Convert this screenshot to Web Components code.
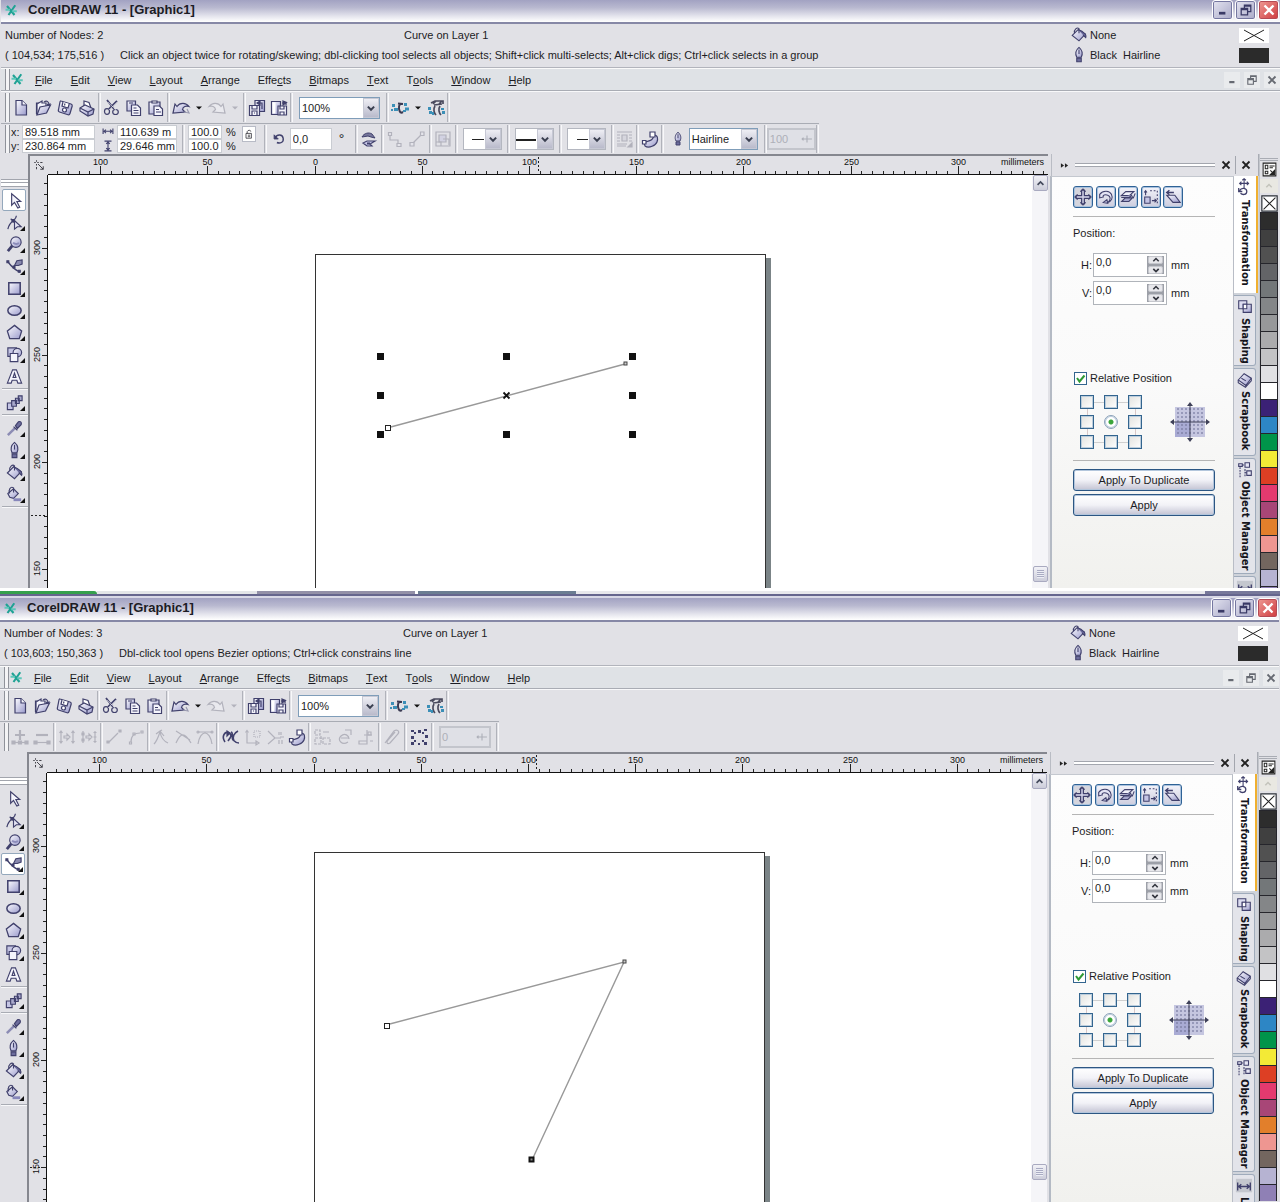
<!DOCTYPE html>
<html lang="en">
<head>
<meta charset="utf-8">
<title>CorelDRAW 11</title>
<style>
html,body{margin:0;height:100%}
body{display:flex;flex-direction:column;height:100vh;overflow:hidden;background:#fff;font:11px/14px "Liberation Sans",Arial,sans-serif;color:#1c1c24}
#first{flex:none}
#second{flex:1;min-height:0}
</style>
</head>
<body>
<corel-window id="first" mode="pick"></corel-window>
<task-strip></task-strip>
<corel-window id="second" mode="bezier"></corel-window>
<script>
const D='#40406c', L='#c4c4e4', W='#f4f4fc';
const ICON={
logo:`<g stroke="#1fa294" stroke-width="2.800"><path d="M4 4l10 12M15 3L6 16"/></g><path d="M2 9h6M11 11h6" stroke="#5cc7ba" stroke-width="2.400"/>`,
newdoc:`<path d="M5 2.500h6l4.500 4.500V17H5z" fill="url(#g)"/><path d="M11 2.500V7h4.500" fill="${W}"/>`,
open:`<path d="M3.500 16V5h3l1.500 2h3" /><path d="M4 17V6l5-3v2l4 0v3" fill="${W}"/><path d="M4 17l3-8 10.500-2-4 8z" fill="url(#g)"/><path d="M11 4c3-2 5 0 5 3M14 6l2 1.500 1.500-2"/>`,
save:`<path d="M6 3l10 3c1 .4 1.400 1 1.200 2L15 15.500c-.3 1-1 1.500-2 1.200L4.500 14c-1-.3-1.400-1-1.100-2L5 4c.2-.8.500-1.200 1-1z" fill="url(#g)"/><path d="M8 4l-1 4 6 2 1.200-4" fill="#fff"/><circle cx="9.500" cy="12" r="2" fill="#fff"/><path d="M10 5.500l-.5 2"/>`,
print:`<path d="M7 8V3l5 1.500L14 10" fill="#fff"/><path d="M3 10l5-3 9 4-1 5-5 2-8-5z" fill="url(#g)"/><path d="M3 10l8 4 6-3M11 14v4"/>`,
cut:`<path d="M5 2l7 9M15 3l-8 8" stroke-width="1.800"/><ellipse cx="5" cy="13.500" rx="2.500" ry="2.800"/><ellipse cx="13.500" cy="14" rx="2.800" ry="2.500"/><path d="M6 4l8 8M15 4L7 12" stroke="#fff" stroke-width=".5"/>`,
copy:`<path d="M3 3h8.500v10H3z" fill="url(#g)"/><path d="M7.500 7h6l3 3v7.500h-9z" fill="${W}"/><path d="M9.500 10h3M9.500 12.500h5M9.500 15h5M5 5h4"/>`,
paste:`<path d="M3 4h11v12H3z" fill="url(#g)"/><path d="M6 5V3h5v2z" fill="#fff"/><path d="M8 8h5.500l3 3v6.500H8z" fill="${W}"/><path d="M10 11.500h3M10 14h5"/>`,
undo:`<path d="M2 15L4 6l2 2.500c3-4.500 9-4 12 0-3-1-6 0-6.500 3l2.500 2.500z" fill="url(#g)"/><path d="M16 11l2 4-5-1" stroke="#9a9ab0"/>`,
redo:`<path d="M18 15L16 6l-2 2.500C11 4 5 4.500 2 8.500c3-1 6 0 6.500 3L6 14z" fill="#e9e9ee"/>`,
imp:`<path d="M8 2.500h9.500v11H8z" fill="url(#g)"/><path d="M2.500 7.500h10v10h-10z" fill="${W}"/><path d="M5 7.500v3.500h5V7.500M5 17v-4h5v4M12 5h3v6M7 15h1"/><path d="M10 5l3-2v4z" fill="currentColor"/>`,
exp:`<path d="M2.500 3.500h9v13h-9z" fill="url(#g)"/><path d="M9 8h8.500v9H9z" fill="${W}"/><path d="M11 8v3h4V8M11 17v-3h4v3M13 5h4v2"/><path d="M14 3l3.500 1.500L14 7z" fill="currentColor"/><path d="M3.500 4.500h3v11h-3z" fill="#fff" stroke="none"/>`,
launch:`<g stroke="#3a3a52" stroke-width="2"><path d="M8 5.500l5 .5M10 6c-2 3-1 7 1 9M13 14l-2 1"/></g><g fill="#3b8fb7" stroke="none"><path d="M2 6h3v3H2zM4 10h4v3H4zM1 11h2v2H1zM14 5h3v3h-3zM15 9.500h4v3h-4zM13 12h3v2h-3z"/></g>`,
online:`<g stroke="#4a4a5e" stroke-width="1.700"><path d="M5 5l4-2h8v3M8 7l8-1M9 8c-2 3-1 7 1 9M14 8c-2 3-1 7 1 9M16 3l-3 3M10 3L7 6"/></g><g fill="#3b8fb7" stroke="none"><path d="M2 9h3v3H2zM3 13h3v3H3zM15 10h3v2h-3zM16 13h3v3h-3zM6 14h2v3H6z"/></g>`,
bucket:`<path d="M2.500 10.500L9 4l8 5-7 7.500z" fill="url(#g)"/><path d="M5 8c-1-4 3-7 5-5v5"/><path d="M9 4c3 1 6 3 8 5 1 2 1 3 .500 4l-3-3" fill="#6a6a9c"/>`,
nib:`<path d="M10 1.500c-3.500 3-4.500 7-2.500 11h5c2-4 1-8-2.500-11z" fill="url(#g)"/><path d="M10 4v5" /><path d="M7.500 13.500h5v4h-5z" fill="#6c6c9c"/>`,
w:`<path d="M3 5v8M17 5v8M4 9h12M7 6.500L4.500 9 7 11.500M13 6.500L15.500 9 13 11.500" stroke-width="1.600"/>`,
h:`<path d="M5 3h10M5 17h10M10 4v12M7.500 7L10 4.500 12.500 7M7.500 13l2.500 2.500 2.500-2.500" stroke-width="1.600"/>`,
lock:`<path d="M5 9h9v8H5z" fill="#fff"/><path d="M7 9V6c1-3 6-3 6 0M8 12h4M8 14.500h4"/>`,
rotate:`<path d="M5 8c2-5 10-5 11 1s-5 8-9 6" stroke-width="2"/><path d="M3 4v6h6z" fill="currentColor"/>`,
flip:`<path d="M3 8c2-4 7-5 10-3l3 4-4-1-3-1z" fill="#77779c" stroke-width="1"/><path d="M16 12H8l-4 2 4 3h5l-2-2z" fill="${L}"/><path d="M8 14.500h3" stroke-width="2"/>`,
conn1:`<path d="M5 5v6h8v5"/><path d="M3.500 3.500h3v3h-3zM12 14.500h4v3h-4z" fill="#e4e4ea"/>`,
conn2:`<path d="M5 15L15 5"/><path d="M3 13.500h4v3.500H3zM13.500 3h3.500v3.500h-3.500z" fill="#e4e4ea"/>`,
break:`<path d="M3 3h14v14H3z"/><path d="M6 6h7v7H6z" fill="#d2d2e2"/><path d="M10 10h6v6M3 13h5v4"/>`,
wrap:`<path d="M2 3h15M2 6h3M14 6h3M2 9h3M14 9h3M2 12h3M14 12h3M2 15h10M2 17h9"/><path d="M7 6h5v6H7z" fill="#d6d6de"/><path d="M17 14v4h-4z" fill="currentColor"/>`,
curve:`<path d="M4 14c4-3 9-1 10-8 4 0 4 4 3 7s-8 7-12 4z" fill="url(#g)"/><path d="M10 3h5v5h-5zM2.500 11.500H6V15H2.500z" fill="#fff"/>`,
add:`<path d="M10 3v10M5 8h10" stroke-width="2.200"/><path d="M3 15.500h14" /><path d="M2 14h3v3H2zM8.500 14h3v3h-3zM15 14h3v3h-3z" fill="currentColor"/>`,
sub:`<path d="M4 8h12" stroke-width="2.200"/><path d="M3 15.500h14"/><path d="M2 14h3v3H2zM15 14h3v3h-3z" fill="currentColor"/>`,
join:`<path d="M4 4v12M16 4v12M2.500 6L4 4l1.500 2M14.500 6L16 4l1.500 2M2.500 14L4 16l1.500-2M14.500 14l1.500 2 1.500-2M7 9h3V7l3 3-3 3v-2H7z"/>`,
split:`<path d="M4 4v12M16 4v12M14.500 5.500h3M14.500 10h3M14.500 14.500h3M7 9h3V7l3 3-3 3v-2H7z"/><path d="M3 6h2v2H3zM3 12h2v2H3z" fill="currentColor"/>`,
toline:`<path d="M5 15L14 6"/><path d="M3 14h2v2H3zM15 3h2v2h-2z" fill="currentColor"/>`,
tocurve:`<path d="M5 15c0-7 4-9 9-9"/><path d="M3.500 15h2v2h-2zM15 4h2v2h-2zM7 6h2v2H7z"/>`,
cusp:`<path d="M3 17c2-2 4-6 6-12M9 5c1 5 3 9 8 11M5 7l4-3 2-1M9 4l4 5"/>`,
smooth:`<path d="M3 16c2-4 3-7 6-8s6 3 9 8M3 4l14 9"/>`,
sym:`<path d="M3 17c1-7 4-11 7-11s6 4 7 11M3 5h14"/><circle cx="3" cy="5" r="1"/><circle cx="17" cy="5" r="1"/>`,
reverse:`<path d="M4 15C0 9 4 4 8 6s1 5-1 8M10 5c3 1 0 6 2 8s4 3 6 3M17 4c-4 2-6 6-4 10" stroke-width="1.600"/><path d="M6 4l3 2-3 3z" fill="currentColor"/>`,
extend:`<path d="M4 4v12h10"/><path d="M2.500 5.500L4 3.500l1.500 2M13 14l3 2-3 2z"/><path d="M11 4h6v6h-6z" stroke-dasharray="1 1"/>`,
extract:`<path d="M3 4l7 7-7 6M14 5v3M16 5v3M10 11h6"/><path d="M14 13v4M17 13v4M15 10h4"/>`,
stretch:`<path d="M3 3h5v5H3zM3 11h6v6H3zM11 11h7v6h-7z" stroke-dasharray="3 1"/><path d="M11 5h6M9 9v3"/>`,
rotn:`<path d="M14 15c-6 4-11-2-7-6s8 0 8 3M7 11h8M11 3h6v5"/>`,
align:`<path d="M3 14h8v3H3zM11 3v11M8 8h8M14 14h3"/><path d="M12 5h3v3h-3z"/>`,
elastic:`<path d="M3 16l9-12c3-2 6 0 4 3l-8 9c-3 2-4-1-2-3l7-8"/>`,
selnodes:`<g fill="currentColor" stroke="none"><path d="M2 3h3v2H2zM9 3h3v3H9zM15 2h3v2h-3zM2 9h3v3H2zM16 8h3v3h-3zM2 15h3v3H2zM9 16h2v2H9zM15 15h3v3h-3zM5 5h2v2H5zM13 13h2v2h-2zM13 5h2v2h-2zM5 13h2v2H5z"/></g>`,
plusbtn:`<path d="M10 5v10M3 10h14M5 8L3 10l2 2" stroke-width="1.600"/>`,
pick:`<path d="M7 3v12l3-3 3.500 6 2-1-3-6h4z" fill="${W}"/>`,
shape:`<path d="M3 17c1-4 3-7 6-9 2-2 3-3 3-5M6 6l6 6" stroke-width="1.300"/><path d="M10 8v9l3-2.500h4z" fill="#e4e4f4"/><path d="M7.500 7h2.500v2.500H7.500z" fill="currentColor"/>`,
zoom:`<path d="M8 11l-5 6" stroke-width="3"/><circle cx="11.500" cy="7.500" r="5.500" fill="url(#g)"/><path d="M8.500 8c2 2 5 2 6 0" stroke="#8c8cba" stroke-width="2"/>`,
bezier:`<path d="M3 5c3 4 8 9 13 11" stroke-width="1.400"/><path d="M2 4h2v2H2zM8.500 9.500h2v2h-2zM14 14h2v2h-2z" fill="currentColor"/><path d="M10 9l2.500-5L18 3v4.500L14 9z" fill="#8888ae"/>`,
rect:`<path d="M4 4h12v12H4z" fill="url(#g)" stroke-width="1.600"/>`,
ellipse:`<ellipse cx="10" cy="10" rx="7" ry="5" fill="url(#g)" stroke-width="1.600"/>`,
poly:`<path d="M10 2.500l7.500 6L15 16.500H5L2.500 8.500z" fill="url(#g)" stroke-width="1.400"/>`,
shapes:`<path d="M3 3h9v9H3z" fill="${L}"/><circle cx="13" cy="8" r="4.500" fill="url(#g)"/><path d="M5.500 9h8v8.500h-8z" fill="${W}"/>`,
text:`<path d="M2.500 17L8 3h4l5.500 14h-4l-1-3h-5l-1 3zM8.500 11h3L10 6.500z" fill="${W}"/>`,
blend:`<path d="M2.500 10.500h6v7h-6z" fill="${L}"/><path d="M7 8h5v6H7zM11 5.500h4V11h-4zM14 3h4v5h-4z" fill="#a9a9cc"/>`,
dropper:`<path d="M3 17l8-8" stroke-width="2.600" stroke="#8c8cb4"/><path d="M9 8l4 4M11 7l3-4c2-1 4 0 3 3l-4 4z" fill="#6e6e9c"/>`,
ifill:`<path d="M3 9l6-5 5 5-5 5-4-1z" fill="url(#g)"/><path d="M5 9c-2-4 1-8 4-6v5"/><path d="M9 15.500h8" stroke="#8787bb" stroke-width="3"/>`,
origin:`<path d="M3 6h2M7 6h2M11 6h3M6 3v2M6 8v2M6 12v3" stroke="#33333b"/><path d="M8 8l7 7M15 11v4h-4" stroke="#33333b"/>`,
t1:`<path d="M10 2v16M2 10h16" stroke-width="4.400"/><path d="M10 3v14M3 10h14" stroke="#d8d8ec" stroke-width="1.600"/><path d="M7 4l3-3 3 3M7 16l3 3 3-3M4 7l-3 3 3 3M16 7l3 3-3 3"/>`,
t2:`<path d="M3 7c4-5 11-4 13 0s0 8-4 9c4-3 3-7 0-8S6 8 7 10l-4 1z" fill="#e4e4f4"/><path d="M7 16l5 1-1-4z" fill="${L}"/>`,
t3:`<path d="M2.500 8.500l5-4.500h9l-5 4.500z" fill="#f0f0fa"/><path d="M2.500 10.500h9l3-3M3 15l4-4h8l-4 4z" fill="#a6a6cc"/><path d="M14 9l2 2 2-5"/>`,
t4:`<path d="M3 10h6v7H3z" fill="${L}"/><path d="M9 3h8v14" stroke-dasharray="2 2"/><path d="M4 8V3M2.500 5L4 3l1.500 2M11 14h5M14 12l2 2-2 2"/>`,
t5:`<path d="M3 8h9l6 8H10z" fill="url(#g)"/><path d="M11 5H3M6 2.500L3 5l3 2.500" stroke-width="1.500"/>`,
tt:`<path d="M9 1v10M4 6h10M7 2.500L9 .800 11 2.500M12 4l2 2-2 2M6 4L4 6l2 2"/><path d="M4 14c2-4 8-3 8 1s-5 4-7 2M3 11v4h4" stroke-width="1.400"/>`,
ts:`<path d="M3 3h9v9H3z" fill="#dcdcf0"/><path d="M8 7h9v9H8z"  fill="url(#g)"/><path d="M8 7h4v5H8z" fill="#fff"/>`,
tb:`<path d="M2.500 10L9 3l8 5-6 8z" fill="url(#g)"/><path d="M2.500 10v3l8 5 6.500-7V8M11 15v3M6 8l5 3"/>`,
to:`<path d="M3 3h4v3H3zM10 2h5v5h-5zM12 11h5v5h-5z" fill="#e6e6f4"/><path d="M4.500 7v11M7 4.500h3M10 9v8M10 13h2" stroke-dasharray="2 1"/>`,
tl:`<path d="M1 2h18v15H1z" fill="#c4c7ce" stroke="none"/><path d="M3 6v9M17 6v9M4 10.500h12M7 8l-3 2.500L7 13M13 8l3 2.500-3 2.500" stroke-width="1.500"/>`,
palmenu:`<path d="M2.500 2.500h15v15h-15z" fill="#fff" stroke="#222"/><path d="M5 5h3v4H5zM5 12h3v3H5zM10 6h6M10 8h4" stroke="#222"/><path d="M16 11v5h-5z" fill="#222" stroke="#222"/><path d="M11 11l4 4" stroke="#222"/>`,
nofill:`<path d="M1 1h18v18H1z" fill="#fff" stroke="#2b3038" stroke-width="1.400"/><path d="M3 3l14 14M17 3L3 17" stroke="#222"/>`,
up:`<path d="M5.500 12l4.500-4.500 4.500 4.500" stroke-width="2.600"/>`,
down:`<path d="M5.500 8l4.500 4.500L14.500 8" stroke-width="2.800"/>`,
tri:`<path d="M4 7h12l-6 6z" fill="currentColor" stroke="none"/>`,
x:`<path d="M5 5l10 10M15 5L5 15" stroke-width="2.600"/>`,
min:`<path d="M5 14h8" stroke-width="3.400"/>`,
max:`<path d="M4 8h8v8H4zM8 8V4h8v8h-4M4 9.500h8M8 5h8" stroke-width="1.600"/>`,
ff:`<path d="M2 5l7 5-7 5zM11 5l7 5-7 5z" fill="currentColor" stroke="none"/>`
};
function svg(n,s=20){return `<svg width="${s}" height="${s}" viewBox="0 0 20 20" fill="none" stroke="currentColor" stroke-width="1.200" aria-hidden="true"><defs><linearGradient id="g" x1="0" y1="0" x2="1" y2="1"><stop offset="0" stop-color="#fcfcff"/><stop offset="1" stop-color="#9a9acc"/></linearGradient></defs>${ICON[n]}</svg>`}
const BASE=`:host,*{box-sizing:border-box}svg{display:block;flex:none}button,input,select{font:inherit;color:inherit;margin:0;padding:0;border:0;background:none;border-radius:0;outline:0}button{display:flex;align-items:center;justify-content:center}`;
function define(name,css,html){
  customElements.define(name,class extends HTMLElement{
    connectedCallback(){
      if(this.shadowRoot)return;
      this.attachShadow({mode:'open'}).innerHTML=`<style>${BASE}${css}</style>${html(this)}`;
    }
  });
}

define('task-strip',`:host{display:flex;flex:none;height:6px;padding-top:3px;background:#fff}
i{display:block;height:3px}.a{width:97px;background:#35a04d;border-radius:0 3px 0 0}.b{width:160px;background:#e3e5e8}.c{width:158px;background:#9390a8}.d{width:158px;margin-left:3px;background:#6b7d92}.e{flex:1;background:#e8e8ec}.f{width:75px;background:#77789a}`,
()=>`<i class="a"></i><i class="b"></i><i class="c"></i><i class="d"></i><i class="e"></i><i class="f"></i>`);

define('tool-button',`:host{display:block;width:22px;height:22px;flex:none;color:${D}}:host([disabled]){color:#b2b2bc}:host([small]){width:14px;color:#111}:host([small][disabled]){color:#b2b2bc}
button{width:100%;height:100%}button:disabled{color:inherit}`,
e=>`<button type="button" aria-label="${e.getAttribute('icon')}" ${e.hasAttribute('disabled')?'disabled':''}>${svg(e.getAttribute('icon'),+(e.getAttribute('size')||20))}</button>`);

define('bar-sep',`:host{display:block;flex:none;width:3px;align-self:stretch;border-left:1px solid #b0b2ba;border-right:1px solid #f8f8fa}`,()=>'');
define('bar-grip',`:host{display:block;flex:none;width:5px;align-self:stretch;margin-left:4px;border-left:1px solid #8f929a;border-right:1px solid #8f929a;background:#f4f4f6}`,()=>'');

define('xp-select',`:host{display:block;position:relative;flex:none;height:22px;background:#fff;border:1px solid #7f9db9}
:host([line]){border-color:#b4b7c0;height:22px}
select{appearance:none;width:100%;height:100%;padding:0 16px 0 2px}
.a{position:absolute;right:0;top:0;bottom:0;width:16px;display:flex;align-items:center;justify-content:center;pointer-events:none;background:linear-gradient(#eeeef4,#b9bacb);border:1px solid #c6c8d4;color:#3a3f50}
.l{position:absolute;top:50%;right:17px;background:#222}`,
e=>{const v=e.getAttribute('value')||'',l=e.getAttribute('line');
return `<select aria-label="${e.getAttribute('label')}"><option>${v}</option></select>${l?`<span class="l" style="width:${l}px;height:${l>15?2:1}px"></span>`:''}<span class="a">${svg('down',14)}</span>`});

define('title-bar',`:host{display:flex;flex:none;align-items:center;height:24px;padding:0 1px 2px 3px;border-bottom:2px solid #8688a6;background:linear-gradient(#a2a2c2,#b9b9d0 35%,#e6e6ee 75%,#fff)}
h1{flex:1;margin:0 0 0 7px;font:bold 13px/20px "Liberation Sans",Arial,sans-serif}
.b{display:flex;gap:2px}button{width:21px;height:20px;border:1px solid #fff;border-radius:3px;background:linear-gradient(135deg,#e4e4f0,#a9a9c8);box-shadow:0 0 0 1px #7577a0 inset;color:#3a3a66}
.x{color:#fff;background:linear-gradient(135deg,#ee9a94,#cf3a3e);box-shadow:0 0 0 1px #b54a55 inset}.logo{width:17px}`,
()=>`<span class="logo">${svg('logo',15)}</span><h1>CorelDRAW 11 - [Graphic1]</h1><div class="b"><button type="button" aria-label="Minimize">${svg('min',16)}</button><button type="button" aria-label="Restore">${svg('max',16)}</button><button type="button" class="x" aria-label="Close">${svg('x',18)}</button></div>`);

define('info-bar',`:host{display:flex;flex:none;height:44px;padding:1px 11px 0 4px;border-bottom:1px solid #b2b4bc}
.t{flex:1}.r,.k{display:flex;align-items:center;height:20px}.n{width:399px}.c{width:115px}.k{width:199px}.k b{flex:1;font-weight:normal;padding-left:2px;white-space:pre}
.k i{width:30px;height:15px;background:#fff;color:#222}.k i.d{background:#2b2b2b}.k span{color:${D}}`,
e=>{const p=e.getAttribute('mode')==='pick';return `<div class="t"><div class="r"><span class="n">Number of Nodes: ${p?2:3}</span><span>Curve on Layer 1</span></div><div class="r"><span class="c">${p?'( 104,534; 175,516 )':'( 103,603; 150,363 )'}</span><span>${p?'Click an object twice for rotating/skewing; dbl-clicking tool selects all objects; Shift+click multi-selects; Alt+click digs; Ctrl+click selects in a group':'Dbl-click tool opens Bezier options; Ctrl+click constrains line'}</span></div></div>
<div><div class="k"><span>${svg('bucket',18)}</span><b>None</b><i><svg width="30" height="15" stroke="#222"><path d="M5 2l20 11M25 2L5 13"/></svg></i></div><div class="k"><span>${svg('nib',18)}</span><b>Black  Hairline</b><i class="d"></i></div></div>`});

define('menu-bar',`:host{display:flex;flex:none;align-items:center;height:23px;background:#dfe2e6;border-top:1px solid #fafafa;border-bottom:1px solid #a9acb4}
nav{flex:1;display:flex;gap:18px;padding-left:10px}
.m{display:flex;gap:4px;color:#666a72}.m button{width:16px;height:16px;background:#e9ebed}`,
()=>`<bar-grip></bar-grip><span>${svg('logo',15)}</span><nav>${['_File','_Edit','_View','_Layout','_Arrange','Effe_cts','_Bitmaps','_Text','T_ools','_Window','_Help'].map(s=>`<button type="button">${s.replace(/_(.)/,'<u>$1</u>')}</button>`).join('')}</nav><div class="m"><button type="button" aria-label="Minimize document">${svg('min',13)}</button><button type="button" aria-label="Restore document">${svg('max',14)}</button><button type="button" aria-label="Close document">${svg('x',14)}</button></div>`);

const tb=(n,x='')=>`<tool-button icon="${n}" ${x}></tool-button>`, sep='<bar-sep></bar-sep>';
define('standard-bar',`:host{display:flex;flex:none;align-items:center;height:32px;padding:1px 0;border-top:1px solid #f8f8fa}
xp-select{width:81px;margin:0 6px}.w{margin-right:1px}`,
()=>`<bar-grip></bar-grip>${tb('newdoc')}${tb('open')}${tb('save')}${tb('print')}${sep}${tb('cut')}${tb('copy')}${tb('paste')}${sep}${tb('undo')}<tool-button icon="tri" size="10" small></tool-button>${tb('redo','disabled')}<tool-button class="w" icon="tri" size="10" small disabled></tool-button>${sep}${tb('imp')}${tb('exp')}${sep}<xp-select value="100%" label="Zoom level"></xp-select>${sep}${tb('launch')}<tool-button icon="tri" size="10" small></tool-button>${tb('online')}${sep}`);

define('pair-fields',`:host{display:grid;grid-template-columns:auto auto auto;column-gap:2px;align-items:center;flex:none;grid-auto-rows:14px}
label{min-width:9px;display:flex;align-items:center;color:${D}}label.t{color:#1c1c24}input{width:var(--w);height:14px;padding:0 0 0 2px;background:#fff;border:1px solid #c9ccd2}span{min-width:2px}.u{padding-left:2px}`,
e=>{const k=e.getAttribute('kind'),a=e.getAttribute('a'),b=e.getAttribute('b');
const lab={pos:['x:','y:'],size:[svg('w',14),svg('h',14)],scale:['','']}[k],c=k==='pos'?'t':'',u=k==='scale'?'%':'';
return [a,b].map((v,i)=>`<label class="${c}" for="f${i}" aria-label="${k} ${i}">${lab[i]}</label><input id="f${i}" value="${v}"><span class="${u&&'u'}">${u}</span>`).join('')});

define('nudge-box',`:host{display:flex;align-items:center;flex:none;height:22px;border:2px solid #c3c5cc;background:#dfe0e6;color:#adafb8}
input{flex:1;min-width:0;padding-left:1px}`,
e=>`<input aria-label="Smoothness" disabled value="${e.getAttribute('value')}">${svg('plusbtn',14)}`);

define('property-bar',`:host{display:flex;flex:none;height:31px}
.b{display:flex;align-items:center;border-top:1px solid #a9acb4;padding:1px 0}
.b>*{flex:none}.pos{--w:73px;margin-left:1px}.size{--w:60px;margin:0 1px 0 2px}.scale{--w:34px;margin-left:-8px}
.lk{width:14px;height:16px;background:#fff;border:1px solid #b8bbc6;margin:-10px 8px 0 6px}.rot{width:42px;height:22px;padding:0 2px;background:#fff;border:1px solid #c9ccd2}
.deg{width:23px;padding-left:7px;font-size:14px}.s{width:39px;margin:0 5px}.hl{width:69px}.g1{margin:0 3px}.g2{width:1px}.g3{width:3px}.box1{width:49px}.box2{width:52px;margin:0 5px}`,
e=>e.getAttribute('mode')==='pick'?
`<div class="b"><bar-grip></bar-grip><pair-fields class="pos" kind="pos" a="89.518 mm" b="230.864 mm"></pair-fields><pair-fields class="size" kind="size" a="110.639 m" b="29.646 mm"></pair-fields>${sep}<pair-fields class="scale" kind="scale" a="100.0" b="100.0"></pair-fields><button type="button" class="lk" aria-label="Nonproportional sizing">${svg('lock',12)}</button>${sep}<span class="g2"></span>${tb('rotate','size="14"')}<input class="rot" aria-label="Angle of rotation" value="0,0"><span class="deg">°</span>${sep}${tb('flip')}<span class="g2"></span>${sep}${tb('conn1','disabled')}${tb('conn2','disabled')}<span class="g2"></span>${sep}${tb('break','disabled')}<span class="g2"></span>${sep}<xp-select class="s" line="12" label="Start arrowhead"></xp-select>${sep}<xp-select class="s" line="20" label="Line style"></xp-select>${sep}<xp-select class="s" line="11" label="End arrowhead"></xp-select>${sep}${tb('wrap','disabled')}${sep}${tb('curve')}${sep}<span class="g3"></span>${tb('nib','size="16"')}<xp-select class="hl" value="Hairline" label="Outline width"></xp-select><span class="g1"></span>${sep}<nudge-box class="box1" value="100"></nudge-box>${sep}</div>`:
`<div class="b"><bar-grip></bar-grip>${tb('add','disabled')}${tb('sub','disabled')}${sep}${tb('join','disabled')}${tb('split','disabled')}${sep}${tb('toline','disabled')}${tb('tocurve','disabled')}${sep}${tb('cusp','disabled')}${tb('smooth','disabled')}${tb('sym','disabled')}${sep}<span class="g2"></span>${tb('reverse')}${tb('extend','disabled')}${tb('extract','disabled')}${tb('curve')}${sep}${tb('stretch','disabled')}${tb('rotn','disabled')}${tb('align','disabled')}<span class="g2"></span>${sep}${tb('elastic','disabled')}<span class="g2"></span>${sep}<span class="g2"></span>${tb('selnodes')}<span class="g2"></span>${sep}<nudge-box class="box2" value="0"></nudge-box>${sep}</div>`);

define('tool-box',`:host{display:block;width:29px;flex:none;color:${D};border-right:2px solid #85878f}
.g{height:8px;margin-top:25px;border-top:1px solid #a2a5ad;border-bottom:1px solid #a2a5ad;background:linear-gradient(#fff 2px,#a2a5ad 2px,#a2a5ad 3px,#fff 3px)}
.l{margin-top:2px;padding-left:1px}button{position:relative;width:24px;height:22px}
button.on{background:#fff;border:1px solid #94a8bc;border-radius:2px}
button i{position:absolute;right:1px;bottom:2px;border:solid transparent;border-width:0 0 5px 5px;border-bottom-color:#111}
hr{margin:1px 0;border:0;border-top:1px solid #a9acb4;border-bottom:1px solid #f8f8fa}`,
e=>{const sel=e.getAttribute('mode')==='pick'?'pick':'bezier';
return `<div class="g"></div><div class="l">${['pick','shape','zoom','bezier','rect','ellipse','poly','shapes','text','-','blend','-','dropper','nib','bucket','ifill','-'].map(n=>n==='-'?'<hr>':`<button type="button" aria-label="${n} tool" class="${n===sel?'on':''}">${svg(n,19)}${n==='pick'||n==='text'?'':'<i></i>'}</button>`).join('')}</div>`});

define('page-ruler',`:host{display:block;overflow:hidden;min-height:0;min-width:0}:host([axis=x]){border-bottom:1px solid #111}:host([axis=y]){border-right:1px solid #111}
svg{width:100%;height:100%}text{font:9px "Liberation Sans",Arial,sans-serif;fill:#111}
:host([axis=x]){position:relative}span{position:absolute;right:4px;top:0;font-size:9px;line-height:12px;color:#111}`,
e=>{const x=e.getAttribute('axis')==='x',m=+e.getAttribute('mark');let s='';
const U=107.2/10;
if(x){for(let i=-24;i<=68;i++){const p=Math.floor(267+i*U)+.5,M=i%10===0;s+=`<path d="M${p} ${M?10:15}V18"/>`;if(M)s+=`<text x="${p}" y="9" text-anchor="middle" stroke="none">${Math.abs(i*5)}</text>`}
 s+=`<path d="M${m}.5 1V17" stroke-dasharray="2 2"/>`}
else{for(let i=-6;i<=35;i++){const p=Math.floor(73+i*U)+.5,M=i%10===0;s+=`<path d="M${M?12:14} ${p}H17"/>`;if(M)s+=`<text transform="translate(10 ${p-1}) rotate(-90)" text-anchor="middle" stroke="none">${300-i*5}</text>`}
 s+=`<path d="M1 ${m}.5H17" stroke-dasharray="2 2"/>`}
return `<svg stroke="#222" aria-hidden="true">${s}</svg>${x?'<span>millimeters</span>':''}`});

define('drawing-page',`:host{display:block;background:#fff;overflow:hidden;min-height:0;min-width:0}svg{width:100%;height:100%}`,
e=>{const p=e.getAttribute('mode')==='pick';let s='';
if(p){s+='<path d="M339 253L577 189" stroke="#999" stroke-width="1.400"/>';for(const x of[332,458,584])for(const y of[181,220,259])if(!(x===458&&y===220))s+=`<rect x="${x-3}" y="${y-3}" width="7" height="7" fill="#111"/>`;
s+='<path d="M455.500 217.500l6 6M461.500 217.500l-6 6" stroke="#111" stroke-width="1.800"/>'}
else s+='<path d="M339 252L577 189L485 387" stroke="#999" fill="none" stroke-width="1.400"/><rect x="482.500" y="384.500" width="4" height="4" fill="#888" stroke="#111" stroke-width="2"/>';
s+=`<rect x="337.500" y="250.500" width="5" height="5" fill="#fff" stroke="#222"/><rect x="576" y="187" width="3" height="3" fill="#ccc" stroke="#444"/>`;
return `<svg aria-hidden="true"><rect x="717" y="83" width="6" height="900" fill="#7b8487"/><rect x="267.500" y="79.500" width="450" height="900" fill="#fff" stroke="#333"/>${s}</svg>`});

define('scroll-track',`:host{display:flex;flex-direction:column;background:#f5f5f8;align-items:center;overflow:hidden;min-height:0}
button{flex:none;width:15px;height:16px;border:1px solid #a9aac0;border-radius:2px;background:linear-gradient(#f2f2f7,#cccdda);color:#444a5c}
.t{margin-top:375px}.t i{width:7px;height:8px;background:repeating-linear-gradient(#a9abc2 0 1px,#eceef5 1px 2px)}`,
()=>`<button type="button" aria-label="Scroll up">${svg('up',13)}</button><button type="button" class="t" aria-label="Scroll thumb"><i></i></button>`);

define('spin-field',`:host{display:flex;align-items:center}label{width:20px;text-align:right;padding-right:1px}
.f{display:flex;width:74px;height:24px;border:1px solid #b0b4ba;background:#fff;align-items:center}input{flex:1;min-width:0;height:14px;padding-left:2px;align-self:flex-start;margin-top:1px}
.s{width:17px;margin-right:2px;background:#9da0a8}.s button{width:15px;height:8px;margin:0 1px;border:1px solid #c5c7cd;border-radius:2px;background:#e8e8ec;color:#33353e}.s button+button{margin-top:2px}em{font-style:normal;padding-left:4px}`,
e=>`<label for="v">${e.getAttribute('label')}:</label><div class="f"><input id="v" value="0,0"><div class="s"><button type="button" aria-label="Increase">${svg('up',12)}</button><button type="button" aria-label="Decrease">${svg('down',12)}</button></div></div><em>mm</em>`);

define('anchor-grid',`:host{display:grid;grid-template-columns:repeat(3,14px);grid-auto-rows:14px;gap:6px 10px;background:linear-gradient(#d0d0d0,#d0d0d0) 7px 7px/48px 1px no-repeat,linear-gradient(#d0d0d0,#d0d0d0) 7px 47px/48px 1px no-repeat,linear-gradient(#d8c8c8,#d8c8c8) 7px 7px/1px 40px no-repeat,linear-gradient(#d8c8c8,#d8c8c8) 55px 7px/1px 40px no-repeat}
input{appearance:none;width:14px;height:14px;border:1px solid #33658f;box-shadow:0 0 0 1px #bccddc inset;background:linear-gradient(135deg,#e2e2de,#fff)}
input[type=radio]{border-radius:50%;background:radial-gradient(#3aa53a 0 2px,#fff 3px);border-color:#8aa0b8}`,
()=>Array.from({length:9},(_,i)=>i===4?'<input type="radio" checked aria-label="Center">':`<input type="checkbox" aria-label="Anchor ${i+1}">`).join(''));

define('transform-panel',`:host{display:block;flex:1;min-width:0;overflow:hidden;margin-left:2px;border-left:2px solid #b4bac4;border-right:1px solid #b9bdc6;border-top:1px solid #c4c8cf;background:linear-gradient(#fdfdfd,#fafafa 50%,#f1f1ee);padding:9px 18px 0 21px}
.t{display:flex;justify-content:space-between;width:110px;color:${D}}.t button{width:20px;height:22px;border:1px solid #2f6296;border-radius:3px;background:linear-gradient(#f3f3fa,#cdcdde);box-shadow:0 0 0 1px #a9c2de inset}.t button:first-child{background:#d5d5dd}
hr{margin:8px 0 0;border:0;border-top:1px solid #b5b5b5;height:0}p{margin:9px 0 13px}spin-field+spin-field{margin-top:4px}
.r{position:relative;display:flex;align-items:center;gap:3px;margin:66px 0 0 1px}.r input{appearance:none;width:13px;height:13px;border:1px solid #33658f;background:#fff}
.r svg{position:absolute;left:1px;pointer-events:none}
.q{display:flex;align-items:center;justify-content:space-between;padding:0 5px 0 7px;margin-top:10px}
.a{width:142px;height:22px;border:1px solid #2c5683;border-radius:3px;background:linear-gradient(#fff,#f2f2f7 50%,#c3c3d3);box-shadow:0 0 0 1px #b3c6dc inset;margin-top:3px}.q+hr{margin:11px 0 8px}`,
()=>{let d='';for(let x=7;x<34;x+=4)for(let y=7;y<34;y+=4)d+=`<path d="M${x} ${y}h2M${x+1} ${y-1}v2"/>`;
return `<div class="t">${['t1','t2','t3','t4','t5'].map((n,i)=>`<button type="button" aria-label="${['Position','Rotate','Scale and mirror','Size','Skew'][i]}">${svg(n,18)}</button>`).join('')}</div><hr><p>Position:</p><spin-field label="H"></spin-field><spin-field label="V"></spin-field>
<div class="r"><input type="checkbox" id="rel" checked><svg width="11" height="11" fill="none" stroke="#2f9a35" stroke-width="2"><path d="M2 5l2.500 3.500L9.500 2.500"/></svg><label for="rel">Relative Position</label></div>
<div class="q"><anchor-grid></anchor-grid><svg width="40" height="40" fill="none"><rect x="5" y="5" width="30" height="30" fill="#c5c6e0"/><rect x="5" y="20" width="15" height="15" fill="#a9abd4"/><g stroke="#77799f" stroke-width=".7">${d}</g><path d="M20 2v36M2 20h36" stroke="#3e4058"/><path d="M20 0l3 4h-6zM20 40l3-4h-6zM0 20l4-3v6zM40 20l-4-3v6z" fill="#3e4058"/></svg></div><hr>
<button type="button" class="a">Apply To Duplicate</button><button type="button" class="a">Apply</button>`});

define('docker-tabs',`:host{display:flex;flex-direction:column;width:25px;flex:none;overflow:hidden;gap:2px;background:#cfd3da}
button{flex:none;writing-mode:vertical-rl;width:22px;justify-content:flex-start;padding:2px 0 0;gap:2px;font:bold 10px/14px "DejaVu Sans",sans-serif;background:#e3e4ea;border:1px solid #9fabbb;border-left:0;border-radius:0 3px 3px 0;color:#15151c}
button svg{color:${D}}.on{width:24px;gap:4px;background:#fff;border:0;border-right:2px solid #f0b030;border-radius:0}`,
e=>[['tt','Transformation',117],['ts','Shaping',71],['tb','Scrapbook',88],['to','Object Manager',116],['tl',e.getAttribute('mode')==='pick'?'':'L',120]].map((t,i)=>`<button type="button" class="${i?'':'on'}" style="height:${t[2]}px" aria-label="${t[1]||'More'}">${svg(t[0],18)}${t[1]?`<span>${t[1]}</span>`:''}</button>`).join(''));

define('docker-pane',`:host{display:flex;flex-direction:column;width:211px;flex:none;overflow:hidden;background:#e1e1e6}
header{flex:none;display:flex;align-items:center;height:22px;padding:0 7px 0 8px;border-left:1px solid #b9bcc4;margin-left:3px;border-right:1px solid #a9acb4;gap:4px;color:#222}
.l{flex:1;height:4px;border:solid #a3a6ae;border-width:1px 0;background:#fff;margin:0 1px 0 2px}.v{width:1px;height:18px;background:#a3a6ae}
header button{width:11px}.m{flex:1;min-height:0;display:flex}`,
e=>`<header>${svg('ff',9)}<span class="l"></span><button type="button" aria-label="Close docker">${svg('x',14)}</button><span class="v"></span><button type="button" aria-label="Close group">${svg('x',14)}</button></header><div class="m"><transform-panel></transform-panel><docker-tabs mode="${e.getAttribute('mode')}"></docker-tabs></div>`);

define('color-palette',`:host{display:flex;flex-direction:column;align-items:center;width:21px;flex:none;overflow:hidden;padding:4px 2px 0 0;border-left:1px solid #c3c6cc}
.g{width:18px;height:3px;flex:none;border:solid #a9acb4;border-width:1px 0}
button{flex:none;width:18px;height:17px;border:1px solid #26262c;border-bottom-width:0}
.n{border:0;height:17px}.u{border:0;background:#e9e8e2;color:#c4c4bc;height:14px;margin:1px 0 2px}`,
e=>`<span class="g"></span><button type="button" class="n" aria-label="Palette menu">${svg('palmenu',17)}</button><button type="button" class="u" aria-label="Scroll palette">${svg('up',12)}</button><button type="button" class="n" aria-label="No colour">${svg('nofill',17)}</button>${'#2d2d2d #404040 #515151 #636467 #737779 #848688 #97989a #ababad #c3c3c5 #e0e0e3 #ffffff #3b2175 #2d86c5 #00944a #f3ea36 #dd3f24 #e43a6f #a84677 #e27f2b #ee9691 #73665f #b6b3d2 #8f80b5'.split(' ').map(c=>`<button type="button" aria-label="${c}" style="background:${c}"></button>`).join('')}`);

define('corel-window',`:host{display:flex;flex-direction:column;background:#e1e1e6}
:host([mode=pick]){padding-left:1px}:host([mode=bezier]){padding-right:1px;border-top:2px solid #66668e}
:host([mode=bezier]) title-bar{border-top:2px solid #d8d8e6;height:26px}
.w{display:flex;flex:1;min-height:0}:host([mode=pick]) .w{flex:none;height:434px}
.s{flex:1;min-width:0;display:grid;grid-template:19px minmax(0,1fr)/18px minmax(0,1fr) 16px;border-top:2px solid #85878f;background:#e1e1e6}
page-ruler[axis=x]{grid-column:2/4}.o{color:#222;padding:2px 0 0 2px}`,
e=>{const m=e.getAttribute('mode'),p=m==='pick',a=`mode="${m}"`;
return `<title-bar></title-bar><info-bar ${a}></info-bar><menu-bar></menu-bar><standard-bar></standard-bar><property-bar ${a}></property-bar>
<div class="w"><tool-box ${a}></tool-box><div class="s"><span class="o">${svg('origin',15)}</span><page-ruler axis="x" mark="${p?490:489}"></page-ruler><page-ruler axis="y" mark="${p?340:394}"></page-ruler><drawing-page ${a}></drawing-page><scroll-track></scroll-track></div><docker-pane ${a}></docker-pane><color-palette></color-palette></div>`});
</script>
</body>
</html>
